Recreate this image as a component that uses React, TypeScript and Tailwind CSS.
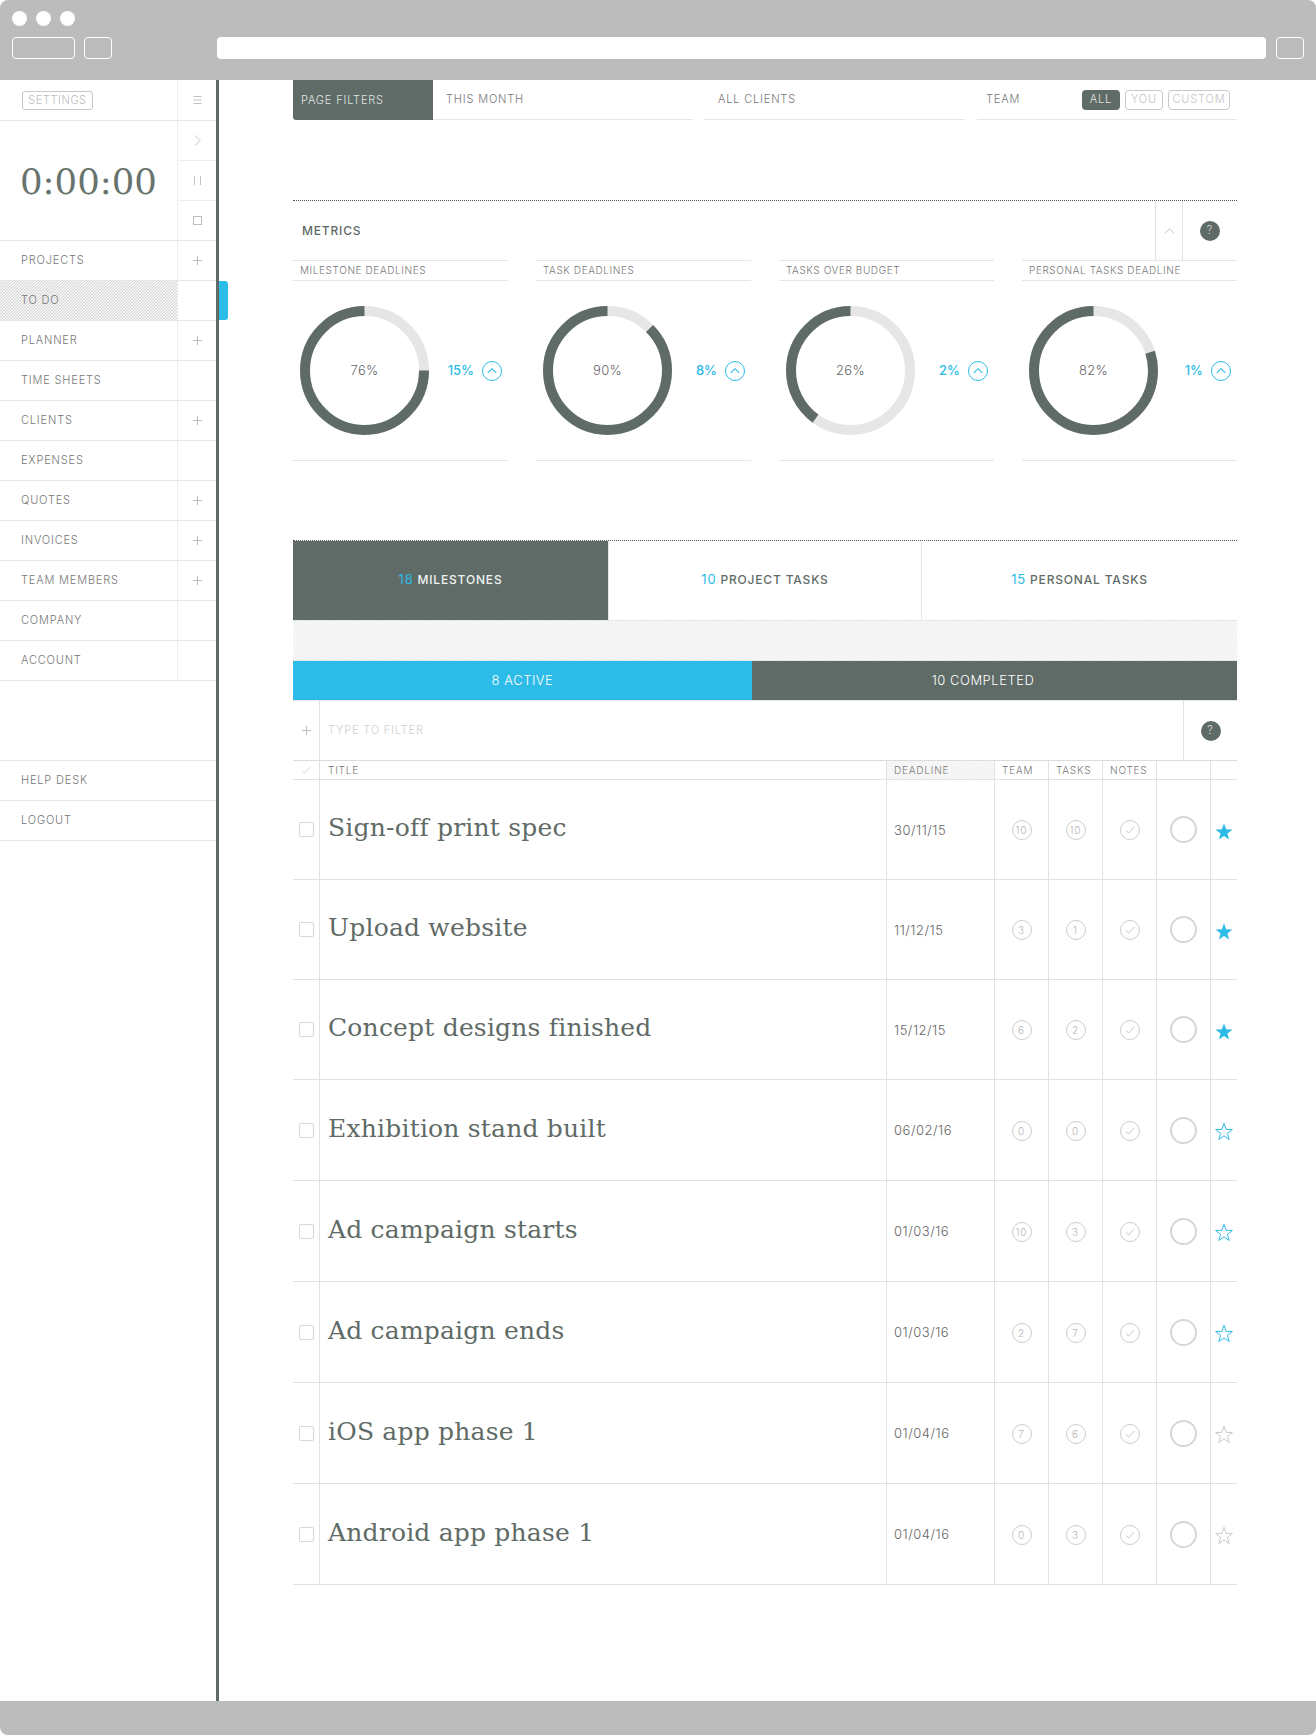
import React from "react";

const hatch = "bg-[linear-gradient(135deg,#dedede_0,#dedede_25%,#ffffff_25%,#ffffff_50%,#dedede_50%,#dedede_75%,#ffffff_75%,#ffffff_100%)] bg-[length:3px_3px]";
const lightHatch = "bg-[linear-gradient(135deg,#f0f0f0_0,#f0f0f0_25%,#ffffff_25%,#ffffff_50%,#f0f0f0_50%,#f0f0f0_75%,#ffffff_75%,#ffffff_100%)] bg-[length:3px_3px]";

const Plus = () => (
  <svg width="11" height="11" viewBox="0 0 11 11" fill="none" stroke="#bdbdbd" strokeWidth="1"><path d="M5.5 1v9M1 5.5h9" /></svg>
);

const Check = ({ w = 10, c = "#b5b5b5" }: { w?: number; c?: string }) => (
  <svg width={w} height={(w * 8) / 10} viewBox="0 0 10 8" fill="none" stroke={c} strokeWidth="0.8"><path d="M1 4.5 3.6 7 9.2 1" /></svg>
);

const ChevUp = ({ c = "#c4c4c4", w = 11, sw = 1 }: { c?: string; w?: number; sw?: number }) => (
  <svg width={w} height={(w * 6) / 11} viewBox="0 0 11 6" fill="none" stroke={c} strokeWidth={sw}><path d="M.8 5.4 5.5.8l4.7 4.6" /></svg>
);

const Help = () => (
  <div className="flex h-5 w-5 items-center justify-center rounded-full bg-[#5f6b66] text-[11px] leading-none text-[#d8dcda]">?</div>
);

const starPoints = "9,0.3 11.1,6.3 17.4,6.5 12.4,10.4 14.2,16.5 9,12.9 3.8,16.5 5.6,10.4 0.6,6.5 6.9,6.3";

const Star = ({ kind }: { kind: number }) => (
  <svg width="18" height="17" viewBox="0 0 18 17" className="mt-[3px]">
    {kind === 0 ? (
      <polygon points={starPoints} fill="#2dbbe8" />
    ) : (
      <polygon points={starPoints} fill="none" stroke={kind === 1 ? "#2dbbe8" : "#c8c8c8"} strokeWidth="1" />
    )}
  </svg>
);

const nav: [string, boolean][] = [
  ["PROJECTS", true],
  ["TO DO", false],
  ["PLANNER", true],
  ["TIME SHEETS", false],
  ["CLIENTS", true],
  ["EXPENSES", false],
  ["QUOTES", true],
  ["INVOICES", true],
  ["TEAM MEMBERS", true],
  ["COMPANY", false],
  ["ACCOUNT", false],
];

const metrics: [string, number, number, string][] = [
  ["MILESTONE DEADLINES", 76, 75, "15%"],
  ["TASK DEADLINES", 90, 87.5, "8%"],
  ["TASKS OVER BUDGET", 26, 40, "2%"],
  ["PERSONAL TASKS DEADLINE", 82, 80, "1%"],
];

const rows: [string, string, string, string, number, string][] = [
  ["Sign-off print spec", "30/11/15", "10", "10", 0, "h-[100px]"],
  ["Upload website", "11/12/15", "3", "1", 0, "h-[100px]"],
  ["Concept designs finished", "15/12/15", "6", "2", 0, "h-[100px]"],
  ["Exhibition stand built", "06/02/16", "0", "0", 1, "h-[101px]"],
  ["Ad campaign starts", "01/03/16", "10", "3", 1, "h-[101px]"],
  ["Ad campaign ends", "01/03/16", "2", "7", 1, "h-[101px]"],
  ["iOS app phase 1", "01/04/16", "7", "6", 2, "h-[101px]"],
  ["Android app phase 1", "01/04/16", "0", "3", 2, "h-[101px]"],
];

const Donut = ({ p, arc }: { p: number; arc: number }) => (
  <div className="relative h-[129px] w-[129px]">
    <svg width="129" height="129" viewBox="0 0 129 129" className="-rotate-90">
      <circle cx="64.5" cy="64.5" r="59.5" fill="none" stroke="#e6e6e6" strokeWidth="10" />
      <circle cx="64.5" cy="64.5" r="59.5" fill="none" stroke="#5f6b66" strokeWidth="10" pathLength={100} strokeDasharray={`${arc} ${100 - arc}`} strokeDashoffset={-(100 - arc)} />
    </svg>
    <div className="absolute inset-0 flex items-center justify-center text-[13px] font-light tracking-[0.02em] text-[#666]">{p}%</div>
  </div>
);

const Ring = ({ children }: { children: React.ReactNode }) => (
  <div className="mt-[1px] flex h-5 w-5 items-center justify-center rounded-full border-[1.5px] border-[#cdcdcd] text-[10px] font-light leading-none text-[#b5b5b5]">{children}</div>
);

export default function App() {
  return (
    <div className="flex h-[1735px] w-[1316px] flex-col overflow-hidden bg-white font-light text-[#777] [font-family:Inter,sans-serif]">
      <header className="flex h-20 shrink-0 flex-col rounded-t-[8px] bg-[#bcbcbc] px-3 pt-[11px]">
        <div className="flex gap-[9px]">
          <span className="h-[15px] w-[15px] rounded-full bg-white" />
          <span className="h-[15px] w-[15px] rounded-full bg-white" />
          <span className="h-[15px] w-[15px] rounded-full bg-white" />
        </div>
        <div className="mt-[11px] flex h-[22px]">
          <span className="w-[63px] rounded-[4px] border-[1.5px] border-white" />
          <span className="ml-[9px] w-[28px] rounded-[4px] border-[1.5px] border-white" />
          <span className="ml-[105px] w-[1049px] rounded-[4px] bg-white" />
          <span className="ml-[10px] w-[28px] rounded-[4px] border-[1.5px] border-white" />
        </div>
      </header>

      <div className="flex min-h-0 flex-1">
        <aside className="relative w-[219px] shrink-0 border-r-[3px] border-[#5f6b66] text-[11px] tracking-[0.075em]">
          <div className="flex h-[41px] border-b border-[#e6e6e6]">
            <div className="flex w-[177px] items-center pl-[22px] pt-[1px]">
              <span className="flex h-[19px] w-[71px] items-center justify-center rounded-[3px] border-[1.5px] border-[#c8c8c8] tracking-[0.05em] text-[#bdbdbd]">SETTINGS</span>
            </div>
            <div className="flex flex-1 items-center justify-center border-l border-[#eeeeee]">
              <svg width="9" height="8" viewBox="0 0 9 8" fill="none" stroke="#c0c0c0" strokeWidth="1"><path d="M.5.5h8M.5 4h8M.5 7.5h8" /></svg>
            </div>
          </div>
          <div className="flex h-[120px] border-b border-[#e6e6e6]">
            <div className="flex w-[177px] items-center pl-[20px] pt-[3px] text-[35.5px] tracking-normal text-[#68736e] [font-family:'DejaVu_Serif',serif]">0:00:00</div>
            <div className="flex flex-1 flex-col border-l border-[#eeeeee]">
              <div className="flex h-10 items-center justify-center border-b border-[#eeeeee]">
                <svg width="7" height="11" viewBox="0 0 7 11" fill="none" stroke="#bdbdbd" strokeWidth="1"><path d="m1 .5 5 5-5 5" /></svg>
              </div>
              <div className="flex h-10 items-center justify-center border-b border-[#eeeeee]">
                <svg width="7" height="9" viewBox="0 0 7 9" fill="none" stroke="#c4c4c4" strokeWidth="1"><path d="M.5 0v9M6.5 0v9" /></svg>
              </div>
              <div className="flex flex-1 items-center justify-center">
                <span className="h-[9px] w-[9px] border border-[#bdbdbd]" />
              </div>
            </div>
          </div>
          {nav.map(([label, plus]) => (
            <div key={label} className="flex h-10 border-b border-[#e6e6e6]">
              <div className={`flex w-[177px] items-center pl-[21px] ${label === "TO DO" ? hatch : ""}`}>{label}</div>
              <div className="flex flex-1 items-center justify-center border-l border-[#eeeeee]">{plus && <Plus />}</div>
            </div>
          ))}
          <div className="mt-[79px] border-t border-[#e6e6e6]">
            {["HELP DESK", "LOGOUT"].map((l) => (
              <div key={l} className="flex h-10 items-center border-b border-[#e6e6e6] pl-[21px]">{l}</div>
            ))}
          </div>
          <span className="absolute left-[219px] top-[201px] h-[39px] w-[9px] rounded-r-[3px] bg-[#2dbbe8]" />
        </aside>

        <main className="ml-[74px] w-[944px] text-[11px] tracking-[0.075em]">
          <div className="flex h-10">
            <div className="flex w-[140px] items-center rounded-bl-[3px] bg-[#5f6b66] pl-2 text-[#e0e4e2]">PAGE FILTERS</div>
            <div className="flex w-[260px] items-center border-b border-[#e6e6e6] pl-[13px]">THIS MONTH</div>
            <div className="ml-[11px] flex w-[261px] items-center border-b border-[#e6e6e6] pl-[14px]">ALL CLIENTS</div>
            <div className="ml-3 flex flex-1 items-center border-b border-[#e6e6e6] pl-[9px]">
              <span className="w-[96px]">TEAM</span>
              <span className="flex h-5 w-[38px] items-center justify-center rounded-[4px] bg-[#5f6b66] text-[#e4e7e5]">ALL</span>
              <span className="ml-[5px] flex h-5 w-[38px] items-center justify-center rounded-[4px] border border-[#c8c8c8] text-[#c4c4c4]">YOU</span>
              <span className="ml-[5px] flex h-5 w-[62px] items-center justify-center rounded-[4px] border border-[#c8c8c8] text-[#c4c4c4]">CUSTOM</span>
            </div>
          </div>

          <div className="mt-[80px] flex h-[60px] items-stretch border-t border-dotted border-[#555]">
            <div className="flex flex-1 items-center pl-[9px] text-[12px] font-medium text-[#5f6b66]">METRICS</div>
            <div className="flex w-[28px] items-center justify-center border-x border-[#e2e2e2]"><ChevUp /></div>
            <div className="flex w-[54px] items-center justify-center"><Help /></div>
          </div>

          <div className="grid grid-cols-4 gap-x-[28px]">
            {metrics.map(([label, p, arc, delta]) => (
              <div key={label}>
                <div className="flex h-[21px] items-center border-y border-[#e6e6e6] pl-[7px] text-[10px] tracking-[0.06em]">{label}</div>
                <div className="flex h-[180px] items-center border-b border-[#e6e6e6] pl-[7px] pr-[6px]">
                  <Donut p={p} arc={arc} />
                  <span className="ml-auto mt-[1px] text-[13px] font-medium tracking-normal text-[#2dbbe8]">{delta}</span>
                  <span className="ml-2 mt-[1px] flex h-5 w-5 items-center justify-center rounded-full border-[1.5px] border-[#2dbbe8]"><ChevUp c="#2dbbe8" w={10} sw={1.2} /></span>
                </div>
              </div>
            ))}
          </div>

          <div className="mt-[79px] border-t border-dotted border-[#555]">
            <div className="flex h-[80px] border-b border-[#e6e6e6] pb-0 text-[12px] font-medium text-[#5f6b66]">
              <div className="flex w-[315px] items-center justify-center bg-[#5f6b66] pb-[2px] text-[#f0f2f1]"><span className="mr-1 text-[13px] font-normal text-[#2dbbe8]">18</span>MILESTONES</div>
              <div className="flex w-[314px] items-center justify-center border-x border-[#e6e6e6] pb-[2px]"><span className="mr-1 text-[13px] font-normal text-[#2dbbe8]">10</span>PROJECT TASKS</div>
              <div className="flex flex-1 items-center justify-center pb-[2px]"><span className="mr-1 text-[13px] font-normal text-[#2dbbe8]">15</span>PERSONAL TASKS</div>
            </div>
          </div>
          <div className={`h-10 border-b border-[#e6e6e6] ${lightHatch}`} />
          <div className="flex h-10 border-b border-[#e6e6e6] text-[13px] font-light tracking-[0.04em] text-white">
            <div className="flex w-[459px] items-center justify-center bg-[#2dbbe8]">8 ACTIVE</div>
            <div className="flex flex-1 items-center justify-center bg-[#5f6b66] pr-[23px]">10 COMPLETED</div>
          </div>

          <div className="flex h-[60px] border-b border-[#dcdcdc]">
            <div className="flex w-[27px] items-center justify-center border-r border-[#e2e2e2]"><Plus /></div>
            <div className="flex flex-1 items-center border-r border-[#e2e2e2] pl-2 text-[#cfcfcf]">TYPE TO FILTER</div>
            <div className="flex w-[53px] items-center justify-center"><Help /></div>
          </div>

          <div className="flex h-[19px] border-b border-[#e2e2e2] text-[10px] tracking-[0.08em]">
            <div className="flex w-[27px] items-center justify-center border-r border-[#e2e2e2]"><Check c="#c8c8c8" /></div>
            <div className="flex w-[567px] items-center border-r border-[#e2e2e2] pl-2">TITLE</div>
            <div className={`flex w-[108px] items-center border-r border-[#e2e2e2] pl-[7px] ${lightHatch}`}>DEADLINE</div>
            <div className="flex w-[54px] items-center border-r border-[#e2e2e2] pl-[7px]">TEAM</div>
            <div className="flex w-[54px] items-center border-r border-[#e2e2e2] pl-[7px]">TASKS</div>
            <div className="flex w-[54px] items-center border-r border-[#e2e2e2] pl-[7px]">NOTES</div>
            <div className="w-[54px] border-r border-[#e2e2e2]" />
          </div>

          {rows.map(([title, date, team, tasks, star, h]) => (
            <div key={title} className={`flex border-b border-[#e2e2e2] ${h}`}>
              <div className="flex w-[27px] items-center justify-center border-r border-[#e2e2e2]">
                <span className="h-[15px] w-[15px] rounded-[2px] border border-[#d8d8d8]" />
              </div>
              <div className="flex w-[567px] items-center border-r border-[#e2e2e2] pb-[3px] pl-2 text-[25px] tracking-[0.2px] text-[#5f6b66] [font-family:'DejaVu_Serif',serif]">{title}</div>
              <div className="flex w-[108px] items-center border-r border-[#e2e2e2] pl-[7px] pt-[2px] text-[13px] tracking-[0.04em] text-[#666]">{date}</div>
              <div className="flex w-[54px] items-center justify-center border-r border-[#e2e2e2]"><Ring>{team}</Ring></div>
              <div className="flex w-[54px] items-center justify-center border-r border-[#e2e2e2]"><Ring>{tasks}</Ring></div>
              <div className="flex w-[54px] items-center justify-center border-r border-[#e2e2e2]"><Ring><Check /></Ring></div>
              <div className="flex w-[54px] items-center justify-center border-r border-[#e2e2e2]">
                <span className="h-[27px] w-[27px] rounded-full border-2 border-[#d6d6d6]" />
              </div>
              <div className="flex flex-1 items-center justify-center"><Star kind={star} /></div>
            </div>
          ))}
        </main>
      </div>

      <footer className="h-[34px] shrink-0 rounded-b-[8px] bg-[#bcbcbc]" />
    </div>
  );
}
